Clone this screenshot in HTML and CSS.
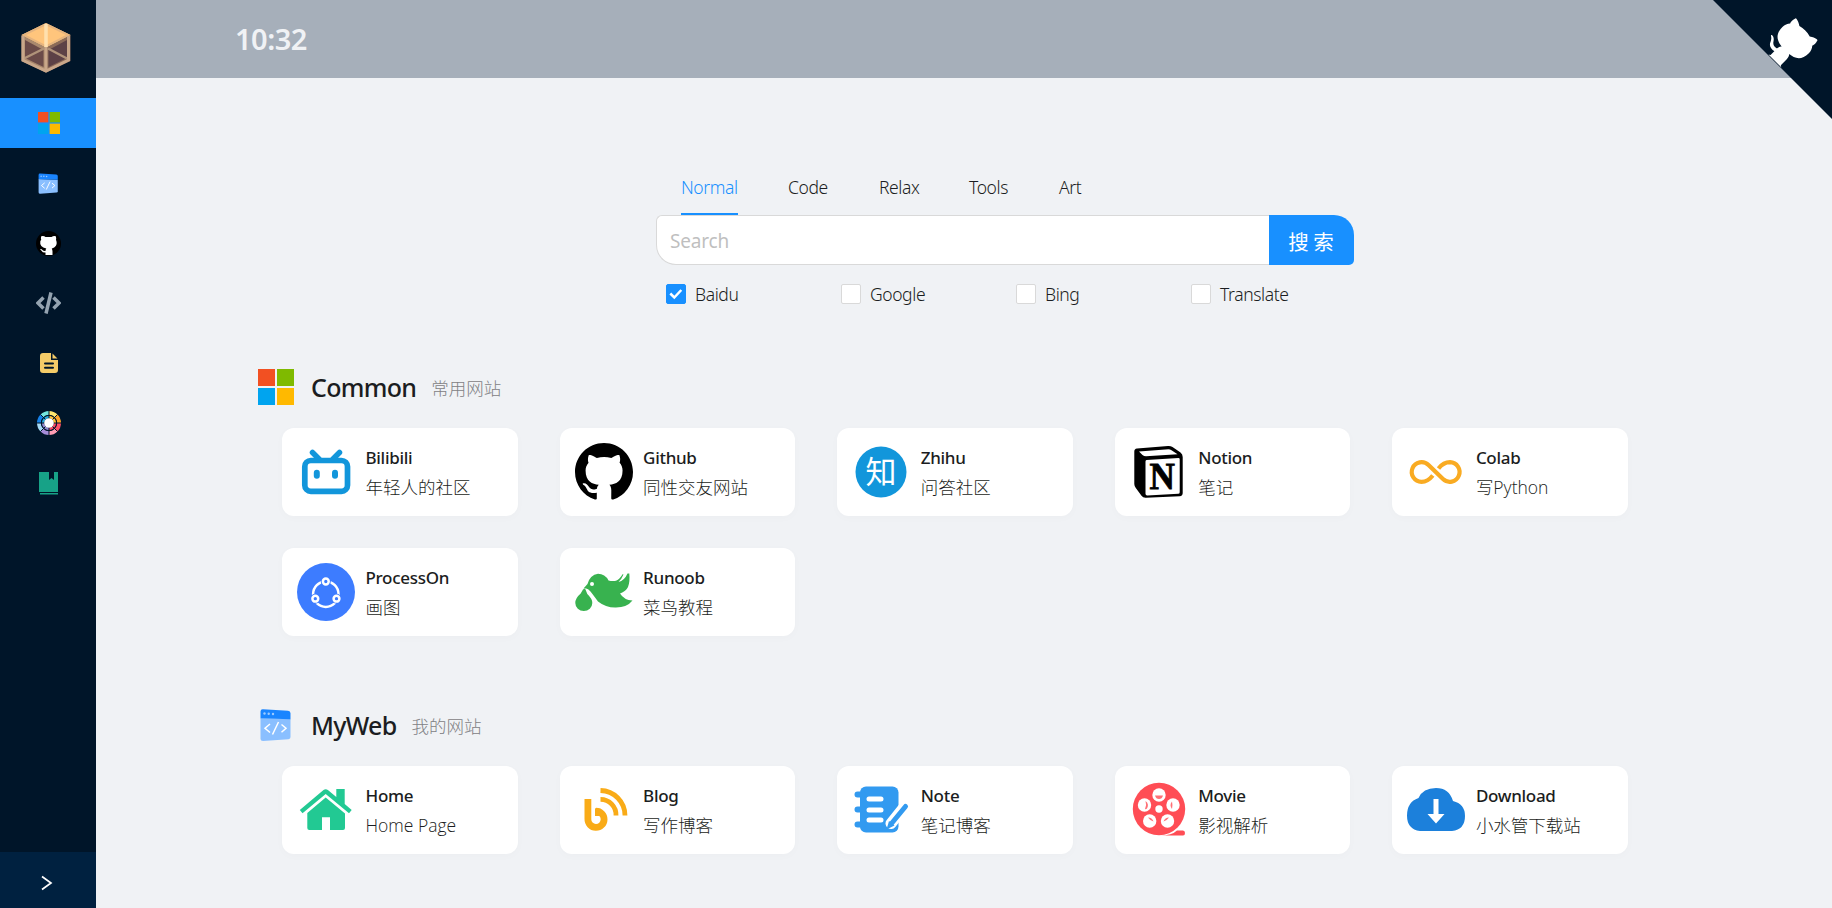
FILE: index.html
```html
<!DOCTYPE html>
<html lang="zh-CN">
<head>
<meta charset="utf-8">
<title>Navigation</title>
<link rel="stylesheet" href="styles.css">
</head>
<body>
<svg class="defs" aria-hidden="true">
  <symbol id="windows" viewBox="0 0 36 36">
    <path fill="#f25022" d="M0 0h17v17H0z"/><path fill="#7fba00" d="M19 0h17v17H19z"/>
    <path fill="#00a4ef" d="M0 19h17v17H0z"/><path fill="#ffb900" d="M19 19h17v17H19z"/>
  </symbol>
  <symbol id="web" viewBox="0 0 36 36">
    <path fill="#8abfff" d="M2.5 11 32.5 12v18q0 2-2 2.200L5 34q-2.500 0-2.500-2z"/>
    <path fill="#1a85ff" d="M2.500 11.300V4.500Q2.500 2 5 2.200L30 3.800q2.500.2 2.500 2.500v6z"/>
    <g fill="#9ccaff"><circle cx="6.500" cy="6.500" r="1.200"/><circle cx="10.700" cy="6.700" r="1.200"/><circle cx="15" cy="7" r="1.200"/></g>
    <path fill="none" stroke="#fff" stroke-width="1.500" d="m12 17-5 4.200 5 4.300M20.500 15l-6 12.500M23.500 17.500l4.500 3.700-4.500 4"/>
  </symbol>
  <symbol id="octo" viewBox="0 0 16 16">
    <path d="M8 0C3.58 0 0 3.58 0 8c0 3.54 2.290 6.530 5.470 7.590.4.070.55-.17.55-.38 0-.19-.01-.82-.01-1.490-2.010.37-2.530-.49-2.690-.94-.09-.23-.48-.94-.82-1.130-.28-.15-.68-.52-.01-.53.63-.01 1.080.58 1.230.82.72 1.210 1.870.87 2.330.66.070-.52.28-.87.51-1.070-1.780-.2-3.640-.89-3.640-3.950 0-.87.31-1.590.82-2.150-.08-.2-.36-1.020.08-2.120 0 0 .67-.21 2.200.82.64-.18 1.320-.27 2-.27s1.360.09 2 .27c1.530-1.040 2.200-.82 2.200-.82.44 1.100.16 1.920.08 2.120.51.56.82 1.270.82 2.150 0 3.070-1.870 3.750-3.650 3.950.29.25.54.73.54 1.480 0 1.070-.01 1.930-.01 2.200 0 .21.15.46.55.38A8.010 8.010 0 0 0 16 8c0-4.420-3.580-8-8-8z"/>
  </symbol>
</svg>
<div class="app">
  <aside class="sider">
    <div class="logo">
      <svg width="50" height="50" viewBox="0 0 50 50">
        <path fill="#a9886d" d="M25 24.500.500 12v26L25 49.500z"/>
        <path fill="#8b6a58" d="M25 24.500 49.500 12v26L25 49.500z"/>
        <path fill="#6b4b49" d="m4 17 18.500 10v17L4 35z"/><path fill="#5c4146" d="M46 17 27.500 27v17L46 35z"/>
        <path stroke="#b0937a" stroke-width="2.500" d="M3 35.500 23 25.500M27 25.500l19 10"/>
        <path fill="#ffc57c" d="M25 0 49.500 12 25 24.500.500 12z"/>
        <path fill="none" stroke="#e5b47f" stroke-width="2" d="M25 1.200 47.300 12 25 23.300 2.700 12z"/>
        <path stroke="#ffe0af" stroke-width="3.500" d="M25 1v23"/>
        <path fill="none" stroke="#c9a78a" stroke-width="3" d="M25 24v25M2 13v24.300L25 48l22.500-11V13"/>
      </svg>
    </div>
    <nav class="menu">
      <a class="menu-item active"><svg width="22" height="22"><use href="#windows"/></svg></a>
      <a class="menu-item"><svg width="23" height="23"><use href="#web"/></svg></a>
      <a class="menu-item"><svg width="25" height="25" viewBox="0 0 25 25"><circle cx="12.500" cy="12.500" r="12.500"/><path fill="#fff" d="M5.200 5.200Q8 4.500 9.500 6h6q2-1.500 4.300-.8.700 2 .2 3.500 2 5-1.500 7.500-1.400 1-2.700 1.200.7 1.500.7 3V24h-7v-2.500q-2.800.3-4-1.800l-1.500-1.600q1.300-.6 2.500.8 1 1.500 3 1 .1-1.700.8-2.500-7-1.300-6-7.200.3-1 .9-1.500-.6-1.500 0-3.500z"/></svg></a>
      <a class="menu-item"><svg width="25" height="22" viewBox="0 0 25 22"><path fill="none" stroke="#94a3b0" stroke-width="3.500" d="m7.500 5.500-5.500 5.500 5.500 5.500M17.500 5.500 23 11l-5.500 5.500M15 .5 10 21.500"/></svg></a>
      <a class="menu-item"><svg width="18" height="20" viewBox="0 0 18 20"><path fill="#f5cc68" d="M3 0h8v7h7v10q0 3-3 3H3q-3 0-3-3V3q0-3 3-3zM12.500.500 17.500 5.500h-5z"/><path stroke="#001529" stroke-width="2" stroke-linecap="round" d="M5 10.500h8M5 14.800h8"/></svg></a>
      <a class="menu-item"><svg width="24" height="24" viewBox="-12 -12 24 24">
        <g fill="none" stroke-width="4">
          <path stroke="#ffe66e" d="M0-10A10 10 0 0 1 7.070-7.070"/><path stroke="#ffa52c" d="M7.070-7.070A10 10 0 0 1 10 0"/>
          <path stroke="#ff5068" d="M10 0A10 10 0 0 1 7.070 7.070"/><path stroke="#ff9db4" d="M7.070 7.070A10 10 0 0 1 0 10"/>
          <path stroke="#a58cd8" d="M0 10A10 10 0 0 1-7.070 7.070"/><path stroke="#a5d9f5" d="M-7.070 7.070A10 10 0 0 1-10 0"/>
          <path stroke="#1681e8" d="M-10 0A10 10 0 0 1-7.070-7.070"/><path stroke="#74e6de" d="M-7.070-7.070A10 10 0 0 1 0-10"/>
        </g>
        <g fill="none" stroke-width="2.500">
          <path stroke="#ffc233" d="M0-6A6 6 0 0 1 6 0"/><path stroke="#f64666" d="M6 0A6 6 0 0 1 0 6"/><path stroke="#9188cf" d="M0 6A6 6 0 0 1-6 0"/><path stroke="#27a8d8" d="M-6 0A6 6 0 0 1 0-6"/>
        </g>
        <circle r="7.700" fill="none" stroke="#001529"/><path stroke="#001529" d="M0-12v24M-12 0h24M-8.500-8.500l17 17M8.500-8.500l-17 17"/><circle r="4.800" fill="#fff"/>
      </svg></a>
      <a class="menu-item"><svg width="19" height="23" viewBox="0 0 19 23"><path fill="#17a287" d="M0 0h10v8l2.500-2L15 8V0h4v20H0zM1 21h18v1.500H1z"/></svg></a>
    </nav>
    <div class="trigger"><svg width="12" height="16" viewBox="0 0 12 16"><path fill="none" stroke="#fff" stroke-width="1.700" d="m1 1.500 9 6.500-9 6.500"/></svg></div>
  </aside>
  <div class="main">
    <header class="header"><span class="clock">10:32</span></header>
    <main class="content">
      <section class="search">
        <div class="tabs">
          <span class="tab t1 on">Normal</span><span class="tab t2">Code</span><span class="tab t3">Relax</span><span class="tab t4">Tools</span><span class="tab t5">Art</span>
        </div>
        <div class="search-bar"><input class="search-input" placeholder="Search"><button class="search-btn">搜 索</button></div>
        <div class="engines">
          <label class="engine"><span class="box checked"><svg width="14" height="12" viewBox="0 0 14 12"><path fill="none" stroke="#fff" stroke-width="2.500" d="m1.300 5.500 4 4 7-7.500"/></svg></span>Baidu</label>
          <label class="engine"><span class="box"></span>Google</label>
          <label class="engine"><span class="box"></span>Bing</label>
          <label class="engine"><span class="box"></span>Translate</label>
        </div>
      </section>
      <section class="group">
        <h2 class="group-head"><svg width="36" height="36"><use href="#windows"/></svg><span class="group-title">Common</span><span class="group-sub">常用网站</span></h2>
        <div class="cards">
          <a class="card"><svg class="icon" viewBox="0 0 58 58"><rect x="7.800" y="17.500" width="42.700" height="30.800" rx="6" fill="none" stroke="#1296db" stroke-width="5.700"/><path stroke="#1296db" stroke-width="5.500" stroke-linecap="round" d="m15.500 9.500 6.500 6.500M42.500 9.500 36 16"/><rect x="16.800" y="26.700" width="6" height="9" rx="3" fill="#1296db"/><rect x="35" y="26.700" width="6" height="9" rx="3" fill="#1296db"/></svg><div class="info"><b class="name">Bilibili</b><span class="desc">年轻人的社区</span></div></a>
          <a class="card"><svg class="icon"><use href="#octo"/></svg><div class="info"><b class="name">Github</b><span class="desc">同性交友网站</span></div></a>
          <a class="card"><svg class="icon" viewBox="0 0 58 58"><circle cx="29" cy="29" r="25.500" fill="#1296db"/><text class="zhi" x="28.700" y="39.500">知</text></svg><div class="info"><b class="name">Zhihu</b><span class="desc">问答社区</span></div></a>
          <a class="card"><svg class="icon" viewBox="0 0 58 58"><path d="M7 5.500 38 3q2.500-.2 4.500 1l8 5.500q2.200 1.500 2.200 4.500v36q0 3-3 3.200L16 54.800q-3 .2-4.500-2L5.800 45q-1.500-2-1.500-4V8.500q0-2.700 2.700-3z"/><path fill="#fff" d="m9 8.500 29.500-2.300q1.500 0 3 1l6 4-31.500 2q-2 0-3.500-1.200zM16.500 17l32-2q1.200 0 1.200 1.200v33q0 1.500-1.500 1.600l-31 1.700q-1.700 0-1.700-1.700V18.500q0-1.500 1-1.500z"/><text class="notion" x="19.500" y="46" textLength="25" lengthAdjust="spacingAndGlyphs">N</text></svg><div class="info"><b class="name">Notion</b><span class="desc">笔记</span></div></a>
          <a class="card"><svg class="icon" viewBox="0 0 58 58"><path fill="none" stroke="#f9ab22" stroke-width="4.200" d="M25.800 32.500q-5 6.300-11.300 6.300a9.800 9.800 0 1 1 7-16.700l14.500 14a9.800 9.800 0 1 0 7-16.900q-6.500 0-11.500 6.300"/></svg><div class="info"><b class="name">Colab</b><span class="desc">写Python</span></div></a>
          <a class="card"><svg class="icon" viewBox="0 0 58 58"><circle cx="29" cy="29" r="29" fill="#3d7cff"/><circle cx="28.800" cy="31.200" r="12.700" fill="none" stroke="#fff" stroke-width="2.500"/><g fill="#3d7cff"><circle cx="28.800" cy="18.500" r="5"/><circle cx="18.300" cy="35.700" r="5"/><circle cx="39.500" cy="35.700" r="5"/></g><g fill="none" stroke="#fff" stroke-width="2.500"><circle cx="28.800" cy="18.500" r="2.900"/><circle cx="18.300" cy="35.700" r="2.900"/><circle cx="39.500" cy="35.700" r="2.900"/></g></svg><div class="info"><b class="name">ProcessOn</b><span class="desc">画图</span></div></a>
          <a class="card"><svg class="icon" viewBox="0 0 58 58"><path fill="#38b24f" d="M8 26.500q2-1.500 2.500 0l1.800 4.500Q17.500 36 17.300 40a8.500 8 0 0 1-17 0q0-5 5.400-9.500z"/><path fill="#38b24f" d="M8.500 25.500 12.500 21Q15 12 23 10.800 30 10.800 33.500 17.500q4 1 7.500.2 4-1.700 6.500-6.500l1 .3q-2 4.800-5 7.500 6-1.500 9-8.500h1.800q.8 8-1.300 13.500-2 4-8 6.500 4 6.500 12.500 7Q52 44.500 41 44.500 31 44.800 23 38.500 19 33 15.500 28.500q-2.500-3-4.500-3z"/><circle cx="17" cy="21" r="2" fill="#fff"/></svg><div class="info"><b class="name">Runoob</b><span class="desc">菜鸟教程</span></div></a>
        </div>
      </section>
      <section class="group second">
        <h2 class="group-head"><svg width="36" height="36"><use href="#web"/></svg><span class="group-title">MyWeb</span><span class="group-sub">我的网站</span></h2>
        <div class="cards">
          <a class="card"><svg class="icon" viewBox="0 0 58 58"><g fill="#22c993"><path d="M39.300 8h8.400v15l7 6-2.700 3.200L28.700 13 5.500 32.200 2.800 29 26.500 9q2.200-1.500 4.400 0l8.400 7z"/><path d="m28.700 16.500 19.300 16V47q0 2-2 2H33V36.300h-8V49H12.300q-2 0-2-2V32z"/></g></svg><div class="info"><b class="name">Home</b><span class="desc">Home Page</span></div></a>
          <a class="card"><svg class="icon" viewBox="0 0 58 58"><g fill="none" stroke="#f9ab17"><path stroke-width="6.800" d="M12.900 18v20a8.100 8.100 0 1 0 8.100-7.800"/><path fill="#f9ab17" stroke="none" d="M20 27.300 26 28v7h-6z"/><path stroke-width="4.800" d="M25.500 18.300A15.500 15.500 0 0 1 41 34.500M25.500 9.500A25 25 0 0 1 50 34.500"/></g></svg><div class="info"><b class="name">Blog</b><span class="desc">写作博客</span></div></a>
          <a class="card"><svg class="icon" viewBox="0 0 58 58"><rect x="8" y="5.500" width="38.500" height="46" rx="6" fill="#329af0"/><path stroke="#329af0" stroke-width="6" stroke-linecap="round" d="M5.500 13.500H11M5.500 28.500H11M5.500 43.500H11"/><path stroke="#fff" stroke-width="5" stroke-linecap="round" d="M17 18h12M17 29h12M17 39h12"/><path stroke="#fff" stroke-width="11" stroke-linecap="round" d="M53 25 39 42.500"/><path fill="none" stroke="#329af0" stroke-width="5" stroke-linecap="round" d="M53.500 25.500 39.500 42.500"/><path fill="#329af0" d="m37 40-2.500 8.500 8-4z"/></svg><div class="info"><b class="name">Note</b><span class="desc">笔记博客</span></div></a>
          <a class="card"><svg class="icon" viewBox="0 0 58 58"><circle cx="29" cy="28" r="26.200" fill="#ff4d55"/><path fill="#ff4d55" d="M30 54.500q12 0 17-5h6q2 0 2 2.500t-2 2.500z"/><g fill="#fff"><circle cx="29" cy="14" r="6.700"/><circle cx="14.500" cy="24" r="6.700"/><circle cx="43" cy="24" r="6.700"/><circle cx="19.700" cy="40" r="6.700"/><circle cx="37.500" cy="40" r="6.700"/><circle cx="29" cy="28" r="3.700"/></g><g fill="#ff4d55" opacity=".8"><path d="M25 14.500h8q-1 3.500-4 3.500t-4-3.500z"/><path d="M15.500 20q4 3 1.500 7.500-1.500 1-2 .5 2-4 .5-8z"/><path d="M42 20.500q-3 3.500 0 7.500 1-3.500 0-7.500z"/><path d="M18 36.500q2.500 3.500 5.500 4-1.500-4-5.500-4z"/><path d="M39 36.500q-2.500 3.500-5.500 4 1.500-4 5.500-4z"/></g></svg><div class="info"><b class="name">Movie</b><span class="desc">影视解析</span></div></a>
          <a class="card"><svg class="icon" viewBox="0 0 58 58"><path fill="#1c80db" d="M13 50Q0 48.500 0 34.500 0 21 11.500 17 16 7 29 7t17 13q12 3 12 15 0 13.500-13 15z"/><path fill="#fff" d="M26.500 18h5v15h6L29 42.500 20.500 33h6z"/></svg><div class="info"><b class="name">Download</b><span class="desc">小水管下载站</span></div></a>
        </div>
      </section>
    </main>
  </div>
</div>
<a class="corner"><svg width="120" height="120" viewBox="0 0 250 250"><path fill="#001529" d="M0 0 250 250V0z"/><g fill="#fff" transform="translate(1.500 -.5) scale(1.010)"><path d="M128.300 109C113.800 99.700 119 89.600 119 89.600 122 82.700 120.500 78.600 120.500 78.600 119.200 72 123.400 76.300 123.400 76.300 127.300 80.900 125.500 87.300 125.500 87.300 122.900 97.600 130.600 101.900 134.400 103.200"/><path d="M115 115C114.900 115.100 118.700 116.500 119.800 115.400L133.700 101.600C136.900 99.200 139.900 98.400 142.200 98.600 133.800 88 127.500 74.400 143.800 58 148.500 53.400 154 51.200 159.700 51 160.300 49.400 163.200 43.600 171.400 40.100 171.400 40.100 176.100 42.500 178.800 56.200 183.100 58.600 187.200 61.800 190.900 65.400 194.500 69 197.700 73.200 200.100 77.600 213.800 80.200 216.300 84.900 216.300 84.900 212.700 93.100 206.900 96 205.400 96.600 205.100 102.400 203 107.800 198.300 112.500 181.900 128.900 168.300 122.500 157.700 114.100 157.900 116.900 156.700 120.900 152.700 124.900L141 136.500C139.800 137.700 141.600 141.900 141.800 141.800z"/></g></svg></a>
</body>
</html>
```
FILE: styles.css
```css
* { box-sizing: border-box; }
body {
  margin: 0;
  height: 908px;
  overflow: hidden;
  background: #f0f2f5;
  color: #1b1d21;
  font: 350 17.5px/30px "Noto Sans", "Noto Sans CJK SC", sans-serif;
  letter-spacing: -0.4px;
}
.defs { position: absolute; width: 0; height: 0; }
.app { display: flex; height: 908px; }
.sider { width: 96px; flex: none; display: flex; flex-direction: column; background: #001529; }
.logo { height: 98px; padding: 23px 0 0 21px; }
.menu { display: flex; flex-direction: column; gap: 10px; flex: 1; }
.menu-item { height: 50px; display: flex; align-items: center; justify-content: center; padding-left: 1px; }
.menu-item.active { background: #1890ff; }
.trigger { height: 56px; background: #002140; display: flex; align-items: center; justify-content: center; padding: 6px 3px 0 0; }
.main { flex: 1; min-width: 0; }
.header { height: 78px; padding-left: 139px; background: #a6afba; display: flex; align-items: center; }
.clock { color: #f0f2f5; font-size: 29px; font-weight: 600; letter-spacing: -0.5px; }
.content { padding: 84px 0 0 162px; }
.search { width: 698px; margin-left: 398px; }
.tabs { display: flex; gap: 50px; height: 53px; padding-left: 25px; }
.tab { height: 53px; line-height: 51px; white-space: nowrap; }
.tab.on { color: #1890ff; border-bottom: 2px solid #1890ff; }
.t1 { width: 57px; }
.t2 { width: 41px; }
.t3 { width: 40px; }
.t4 { width: 40px; }
.search-bar { display: flex; height: 50px; }
.search-input {
  flex: 1;
  min-width: 0;
  border: 1px solid #d9d9d9;
  border-right: 0;
  border-radius: 6px 0 0 20px;
  padding: 2px 13px 0;
  background: #fff;
  font: 400 19px "Noto Sans", sans-serif;
  letter-spacing: -0.2px;
}
.search-input::placeholder { color: #bfbfbf; }
.search-btn {
  width: 85px;
  border: 0;
  padding: 2px 1px 0 0;
  border-radius: 0 20px 5px 0;
  background: #1890ff;
  color: #fff;
  font: 400 20.5px "Noto Sans CJK SC", sans-serif;
}
.engines { display: flex; padding: 15px 0 0 10px; }
.engine { width: 175px; flex: none; display: flex; align-items: center; gap: 9px; line-height: 28px; padding-bottom: 1px; margin-bottom: 1px; }
.box { width: 20px; height: 20px; border: 1px solid #d9d9d9; border-radius: 2px; background: #fff; display: flex; align-items: center; justify-content: center; }
.box.checked { background: #1890ff; border-color: #1890ff; }
.group { padding-top: 59px; }
.group.second { padding-top: 71px; }
.group-head { display: flex; align-items: center; height: 36px; margin: 0; font-size: 17.5px; font-weight: 300; }
.group-title { margin-left: 17px; font-size: 25px; font-weight: 500; letter-spacing: -0.7px; }
.group-sub { margin-left: 15px; padding-top: 1px; color: #7f8184; letter-spacing: 0; }
.cards { display: grid; grid-template-columns: repeat(5, 235.6px); gap: 32px 42px; padding: 23px 0 0 24px; }
.card { height: 88px; display: flex; align-items: center; padding-left: 15px; border-radius: 12px; background: #fff; box-shadow: 0 2px 10px rgba(0, 0, 0, 0.02); }
.icon { width: 58px; height: 58px; flex: none; }
.info { margin-left: 10.5px; display: flex; flex-direction: column; white-space: nowrap; }
.name { font-weight: 500; font-size: 17px; letter-spacing: -0.3px; line-height: 29px; }
.desc { letter-spacing: 0; font-family: "Open Sans", "Noto Sans CJK SC", sans-serif; font-weight: 300; line-height: 30px; }
.zhi { font: 400 31px "Noto Sans CJK SC", sans-serif; fill: #fff; text-anchor: middle; }
.notion { font: 700 37px "Liberation Serif", serif; stroke: #000; stroke-width: 0.8px; }
.corner { position: absolute; top: -1px; right: 0; width: 120px; height: 120px; }
```
